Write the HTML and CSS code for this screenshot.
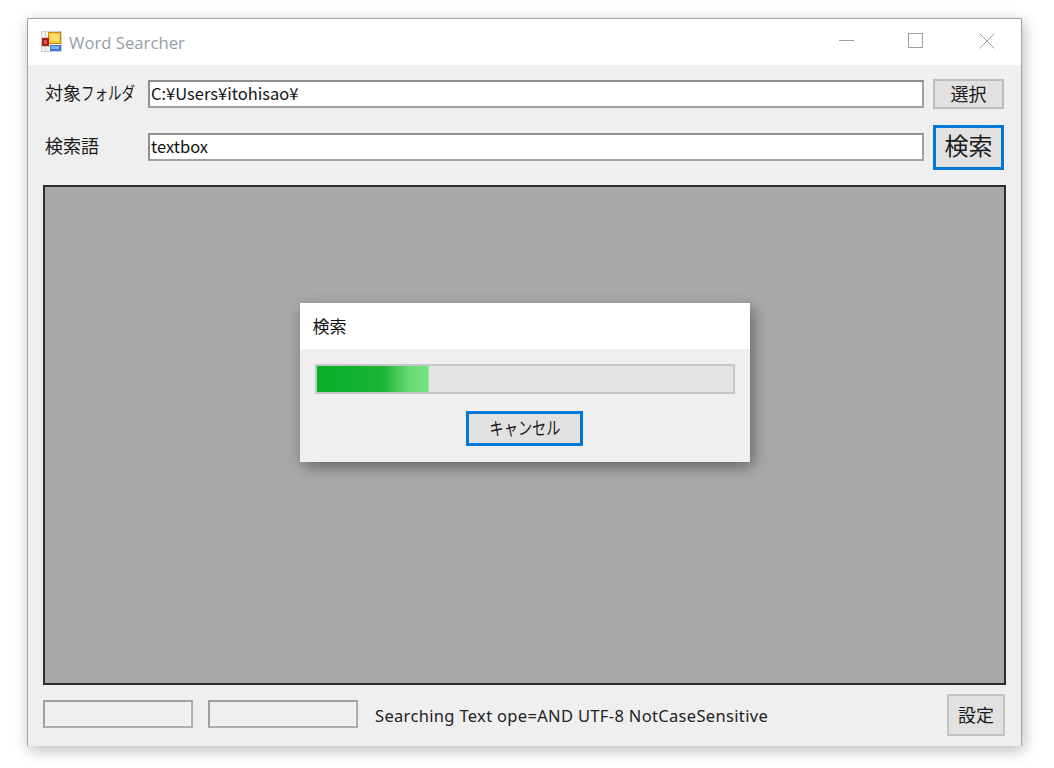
FILE: index.html
```html
<!DOCTYPE html>
<html lang="ja">
<head>
<meta charset="utf-8">
<title>Word Searcher</title>
<link rel="stylesheet" href="styles.css">
</head>
<body>
<div class="window">
  <header class="titlebar">
    <svg class="app-icon" width="21" height="21" viewBox="0 0 21 21">
      <rect x="0" y="0" width="21" height="21" fill="#cfcfcf"/>
      <rect x="1" y="1" width="19" height="19" fill="#f4f4f4"/>
      <rect x="1" y="6" width="6" height="1" fill="#d0d0d0"/>
      <rect x="4" y="1" width="1" height="5" fill="#d0d0d0"/>
      <rect x="1" y="15" width="8" height="1" fill="#d0d0d0"/>
      <rect x="4" y="15" width="1" height="5" fill="#d0d0d0"/>
      <rect x="7" y="1" width="13" height="12" fill="#c98a10"/>
      <rect x="8" y="2" width="11" height="10" fill="#f6c93a"/>
      <rect x="10" y="3" width="8" height="7" fill="#fbdc6d"/>
      <rect x="1" y="7" width="7" height="8" fill="#a81c14"/>
      <rect x="3" y="9" width="3" height="4" fill="#e4584a"/>
      <rect x="9" y="14" width="11" height="6" fill="#3c78d8"/>
      <rect x="10" y="15" width="8" height="3" fill="#7fb0ee"/>
    </svg>
    <span class="title">Word Searcher</span>
    <div class="controls">
      <svg class="ctl" width="16" height="16" viewBox="0 0 16 16"><path d="M2 7.5H17" stroke="#a0a0a0" fill="none"/></svg>
      <svg class="ctl" width="16" height="16" viewBox="0 0 16 16"><rect x="0.5" y="0.5" width="14" height="14" stroke="#a0a0a0" fill="none"/></svg>
      <svg class="ctl" width="16" height="16" viewBox="0 0 16 16"><path d="M0.5 0.5L15.5 15.5M15.5 0.5L0.5 15.5" stroke="#a0a0a0" fill="none"/></svg>
    </div>
  </header>
  <main class="client">
    <div class="row row-folder">
      <label class="label">対象<span class="kana">フォルダ</span></label>
      <div class="input">C:¥Users¥itohisao¥</div>
      <button class="btn btn-select">選択</button>
    </div>
    <div class="row row-word">
      <label class="label">検索語</label>
      <div class="input">textbox</div>
      <button class="btn btn-search">検索</button>
    </div>
    <section class="panel">
      <div class="dialog">
        <div class="dialog-head">検索</div>
        <div class="dialog-body">
          <div class="progress"><div class="progress-fill" style="width:27%"></div></div>
          <button class="btn btn-cancel"><span class="kana-cancel">キャンセル</span></button>
        </div>
      </div>
    </section>
    <footer class="footer">
      <div class="status-box"></div>
      <div class="status-box"></div>
      <span class="status-text">Searching Text ope=AND UTF-8 NotCaseSensitive</span>
      <button class="btn btn-settings">設定</button>
    </footer>
  </main>
</div>
</body>
</html>
```
FILE: styles.css
```css
* { box-sizing: border-box; }
html, body { margin: 0; height: 100%; background: #fff; }
body {
  padding: 18px 0 0 27px;
  font-family: "Noto Sans CJK JP", "Noto Sans", sans-serif;
  font-size: 16px;
  color: #1a1a1a;
  overflow: hidden;
}
.window {
  width: 995px;
  height: 728px;
  border: 1px solid #a3a3a3;
  border-bottom: 0;
  background: #efefef;
  display: flex;
  flex-direction: column;
  box-shadow: 2px 4px 14px rgba(0,0,0,.28);
}
.titlebar {
  height: 46px;
  background: #fff;
  display: flex;
  align-items: center;
  padding-left: 13px;
  flex: none;
}
.app-icon { display: block; margin-top: -1px; }
.title {
  margin-left: 7px;
  font-family: "Open Sans", sans-serif;
  font-size: 16.7px;
  color: #959da9;
}
.controls {
  margin-left: auto;
  display: flex;
  gap: 55px;
  padding-right: 26px;
}
.ctl { display: block; margin-top: -2px; overflow: visible; }
.client { flex: 1; display: flex; flex-direction: column; padding: 0 15px; }
.row { display: flex; align-items: flex-start; }
.row-folder { height: 44px; padding-top: 15px; }
.row-word { height: 45px; margin-top: 16px; }
.row-word .label, .row-word .input { margin-top: 8px; }
.label { width: 105px; padding-left: 2px; font-size: 18px; line-height: 24px; flex: none; white-space: nowrap; }
.kana {
  display: inline-block;
  width: 54px;
  transform: scaleX(.75);
  transform-origin: 0 50%;
  white-space: nowrap;
}
.input {
  width: 776px;
  height: 28px;
  flex: none;
  background: #fff;
  border: 2px solid #8f8f8f;
  border-right-color: #a2a2a2;
  border-bottom-color: #a2a2a2;
  padding-left: 1px;
  font-size: 16.5px;
  line-height: 22px;
  color: #111;
  white-space: nowrap;
}
.btn {
  font-family: "Noto Sans CJK JP", sans-serif;
  background: #e1e1e1;
  border: 2px solid #bdbdbd;
  color: #1a1a1a;
  padding: 0;
  display: block;
  flex: none;
}
.btn-select { width: 71px; height: 30px; margin: -1px 0 0 9px; font-size: 18px; line-height: 24px; padding-bottom: 3px; }
.btn-search {
  width: 71px; height: 45px; margin-left: 9px;
  border: 3px solid #0078d7;
  font-size: 24px; line-height: 32px;
  padding-bottom: 5px;
}
.panel {
  width: 963px;
  height: 500px;
  margin-top: 15px;
  background: #a9a9a9;
  border: 2px solid #2e2e2e;
  flex: none;
  display: flex;
  justify-content: center;
  align-items: flex-start;
  padding-top: 116px;
}
.dialog {
  width: 450px;
  height: 159px;
  background: #efefef;
  box-shadow: 3px 5px 14px rgba(0,0,0,.4);
  display: flex;
  flex-direction: column;
}
.dialog-head {
  height: 46px;
  background: #fff;
  padding: 11px 0 0 13px;
  font-size: 17px;
  line-height: 24px;
  color: #111;
}
.dialog-body {
  flex: 1;
  display: flex;
  flex-direction: column;
  align-items: center;
  padding-top: 15px;
  gap: 17px;
}
.progress {
  width: 420px;
  height: 30px;
  background: #e4e4e4;
  border: 2px solid #c6c6c6;
}
.progress-fill {
  height: 100%;
  background: linear-gradient(90deg, #06b029 0%, #18b433 58%, #68d973 82%, #7ae382 100%);
  box-shadow: inset -1px 0 0 #8fe79a;
}
.btn-cancel {
  width: 117px;
  height: 35px;
  border: 3px solid #0078d7;
  font-size: 18px;
  line-height: 24px;
  padding-bottom: 3px;
}
.kana-cancel {
  display: inline-block;
  transform: scaleX(.79);
  white-space: nowrap;
}
.footer {
  display: flex;
  align-items: center;
  margin-top: 9px;
  height: 42px;
}
.status-box {
  width: 150px;
  height: 28px;
  border: 2px solid #a0a0a0;
  border-right-color: #adadad;
  border-bottom-color: #adadad;
  box-shadow: inset -1px -1px 0 #f8f8f8;
  background: #efefef;
  margin-right: 15px;
  flex: none;
  margin-bottom: 2px;
}
.status-text {
  margin: 1px 0 0 2px;
  font-family: "Noto Sans", sans-serif;
  font-size: 16.5px;
  letter-spacing: 0.33px;
  white-space: nowrap;
  color: #222;
}
.btn-settings {
  width: 58px;
  height: 42px;
  margin-left: auto;
  margin-right: 1px;
  border: 2px solid #c2c2c2;
  font-size: 18px;
  line-height: 24px;
  padding-bottom: 2px;
}
```
